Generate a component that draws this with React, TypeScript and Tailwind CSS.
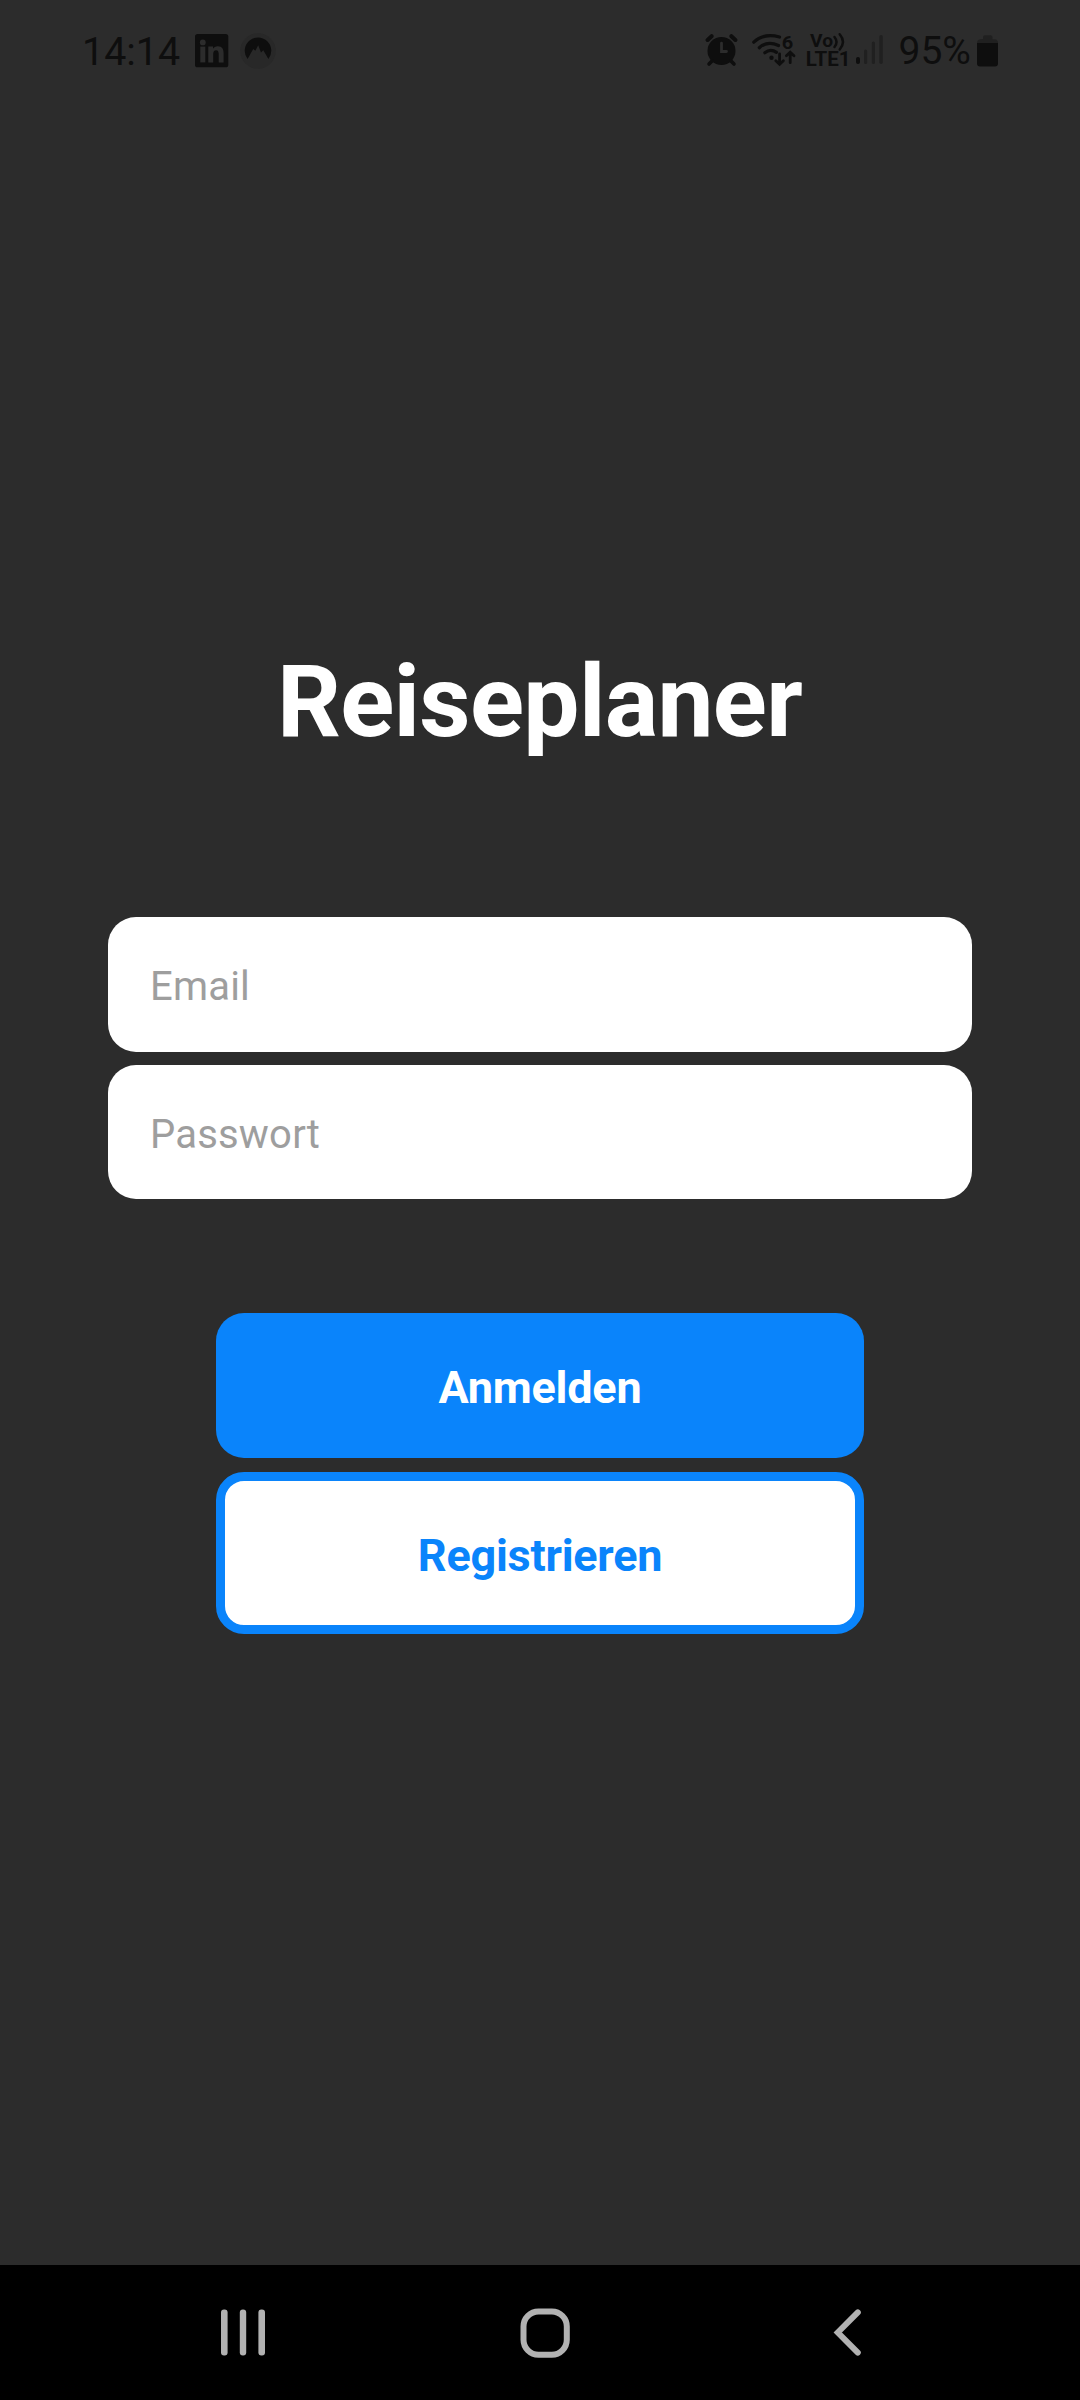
import React from "react";

const INK = "#0e0e0e";

function LinkedInIcon() {
  return (
    <svg className="mt-[2px] ml-[15px] h-[34px] w-[34px]" viewBox="0 0 34 34">
      <rect x="0" y="0" width="33.3" height="33.3" rx="2.6" fill={INK} />
      <g fill="#2c2c2c">
        <circle cx="7.8" cy="8.4" r="2.9" />
        <rect x="5.3" y="12.6" width="5" height="15.8" />
        <path d="M13.3 12.6h4.7v2.2c.9-1.6 2.6-2.6 4.8-2.6 4.5 0 5.8 2.9 5.8 7.1v9.1h-4.900v-8.200c0-2.200-.4-4-2.600-4-2.300 0-2.900 1.700-2.900 4v8.200h-4.900z" />
      </g>
    </svg>
  );
}

function MountainIcon() {
  return (
    <svg className="mt-[2px] ml-[11px] h-9 w-9" viewBox="0 0 36 36">
      <circle cx="18" cy="18" r="17.8" fill="#282828" />
      <path
        d="M7.6 26A13.3 13.3 0 1 1 28.4 26L23.3 17.2 21 19.5 18.2 12.3 15.3 17.8 13.2 16z"
        fill={INK}
      />
    </svg>
  );
}

function AlarmIcon() {
  return (
    <svg className="h-[34px] w-[34px]" viewBox="0 0 34 34" fill="none" strokeLinecap="round">
      <circle cx="16.5" cy="18" r="14" fill={INK} />
      <path d="M2.600 7L6.600 3.200M30.400 7L26.400 3.200" stroke={INK} strokeWidth="4" />
      <path d="M7 28l-3 3M26 28l3 3" stroke={INK} strokeWidth="3.6" />
      <path d="M16.500 10.200v8.300h5" stroke="#2c2c2c" strokeWidth="2.800" />
    </svg>
  );
}

function WifiIcon() {
  return (
    <svg
      className="ml-[13px] h-[34px] w-[44px]"
      viewBox="0 0 44 34"
      fill="none"
      stroke={INK}
      strokeWidth="3.2"
      strokeLinecap="round"
    >
      <path d="M1.800 9.200C9.500 1.900 18.500 1.500 27.500 4" />
      <path d="M7.300 14.700C12.500 9.900 19.500 9.300 26.500 12.500" />
      <path d="M12.800 19.700C16.500 16.800 21 16.800 24.500 19.400" />
      <circle cx="19.500" cy="24.800" r="2.200" fill={INK} stroke="none" />
      <path d="M27.600 21v10M23.800 27.700l3.800 3.600 3.800-3.600" strokeWidth="2.800" />
      <path d="M38.200 29.700V20M34.400 22.800l3.800-3.600 3.800 3.600" strokeWidth="2.800" />
      <text
        x="29.800"
        y="15.500"
        fill={INK}
        stroke="none"
        fontSize="18.500"
        fontWeight="700"
        textLength="11.500"
        lengthAdjust="spacingAndGlyphs"
        fontFamily="Roboto, sans-serif"
      >
        6
      </text>
    </svg>
  );
}

function VolteIcon() {
  return (
    <svg
      className="ml-[10px] h-[36px] w-[46px] overflow-visible"
      viewBox="0 0 46 36"
      fill={INK}
      fontFamily="Roboto, sans-serif"
      fontWeight="700"
    >
      <text x="4" y="15.300" fontSize="18.500" textLength="23" lengthAdjust="spacingAndGlyphs">
        Vo
      </text>
      <path
        d="M28.500 5c2.600 3.200 2.600 6.800 0 10M33.700 2.300c4.400 5.200 4.400 10.200 0 15.200"
        fill="none"
        stroke={INK}
        strokeWidth="2.500"
        strokeLinecap="round"
      />
      <text x="-0.300" y="34" fontSize="20" textLength="44.800" lengthAdjust="spacingAndGlyphs">
        LTE1
      </text>
    </svg>
  );
}

function SignalIcon() {
  return (
    <svg className="ml-[3px] h-[32px] w-[28px]" viewBox="0 0 28 32" fill="#202020">
      <rect x="1" y="23" width="4" height="7" rx="2" fill={INK} />
      <rect x="9" y="15.5" width="3.2" height="14.5" rx="1.6" />
      <rect x="16.8" y="7.5" width="3.2" height="22.5" rx="1.6" />
      <rect x="24.3" y="1" width="3.5" height="29" rx="1.7" />
    </svg>
  );
}

function BatteryIcon() {
  return (
    <svg className="mt-px ml-[6px] h-[32px] w-[22px]" viewBox="0 0 22 32">
      <path
        d="M6 4V2.500Q6 .3 8 .3h5.500Q15.500.3 15.500 2.500V4.200H18Q21 4.500 21 8.200H0Q0 4.500 3.500 4.200z"
        fill="#202020"
      />
      <path d="M0 8h21v20.500q0 3-3 3H3q-3 0-3-3z" fill={INK} />
    </svg>
  );
}

function StatusBar() {
  return (
    <header className="flex h-[100px] items-center justify-between pr-[81px] pl-[82px] text-[39px] leading-[40px] text-[#0e0e0e]">
      <div className="flex items-center">
        <span className="mt-[4px] inline-block w-[98px] text-[39.4px] whitespace-nowrap">14:14</span>
        <LinkedInIcon />
        <MountainIcon />
      </div>
      <div className="flex items-center">
        <AlarmIcon />
        <WifiIcon />
        <VolteIcon />
        <SignalIcon />
        <span className="mt-[2px] ml-[15.5px] inline-block w-[72.5px] whitespace-nowrap">95%</span>
        <BatteryIcon />
      </div>
    </header>
  );
}

function NavigationBar() {
  return (
    <nav className="flex h-[135px] items-center bg-black pl-[221px]">
      <svg className="h-[47px] w-[45px]" viewBox="0 0 45 47" fill="#b2b2b2">
        <rect x="0" y="0.5" width="6.6" height="46" rx="3" />
        <rect x="18.8" y="0.5" width="6.4" height="46" rx="3" />
        <rect x="37.4" y="0.5" width="6.6" height="46" rx="3" />
      </svg>
      <svg className="ml-[254px] h-[50px] w-[50px]" viewBox="0 0 50 50" fill="none">
        <rect x="3.5" y="3.5" width="43.3" height="43.3" rx="15" stroke="#b2b2b2" strokeWidth="6" />
      </svg>
      <svg className="ml-[263px] h-[47px] w-[28px]" viewBox="0 0 28 47" fill="none">
        <path d="M24.800 3.400L4.800 23.500L24.800 43.600" stroke="#b2b2b2" strokeWidth="6" strokeLinecap="round" />
      </svg>
    </nav>
  );
}

const fieldClass =
  "block w-full rounded-[28px] bg-white px-[42px] text-[40px] tracking-[0.2px] text-black outline-none placeholder:text-[#9e9e9e] placeholder:opacity-100";

export default function App() {
  return (
    <div className="flex h-[2400px] w-[1080px] flex-col bg-[#2c2c2c] font-['Roboto',sans-serif]">
      <StatusBar />
      <main className="flex flex-1 flex-col items-center">
        <h1 className="mt-[543px] pr-px text-[100px] leading-[118px] font-bold tracking-[-0.7px] text-white">
          Reiseplaner
        </h1>
        <form className="mt-[156px] flex w-full flex-col items-center" onSubmit={(e) => e.preventDefault()}>
          <div className="flex w-[864px] flex-col gap-[13px]">
            <input type="email" placeholder="Email" className={`${fieldClass} h-[135px] pt-[3px]`} />
            <input type="password" placeholder="Passwort" className={`${fieldClass} h-[134px] pt-[5px]`} />
          </div>
          <div className="mt-[114px] flex w-[648px] flex-col gap-[14px] text-[45px] font-bold tracking-[-0.25px]">
            <button type="submit" className="h-[145px] rounded-[28px] bg-[#0a84fb] pt-[5px] text-white">
              Anmelden
            </button>
            <button
              type="button"
              className="h-[162px] rounded-[28px] border-[9px] border-[#0a84fb] bg-white pt-[5px] text-[#0a84fb]"
            >
              Registrieren
            </button>
          </div>
        </form>
      </main>
      <NavigationBar />
    </div>
  );
}
